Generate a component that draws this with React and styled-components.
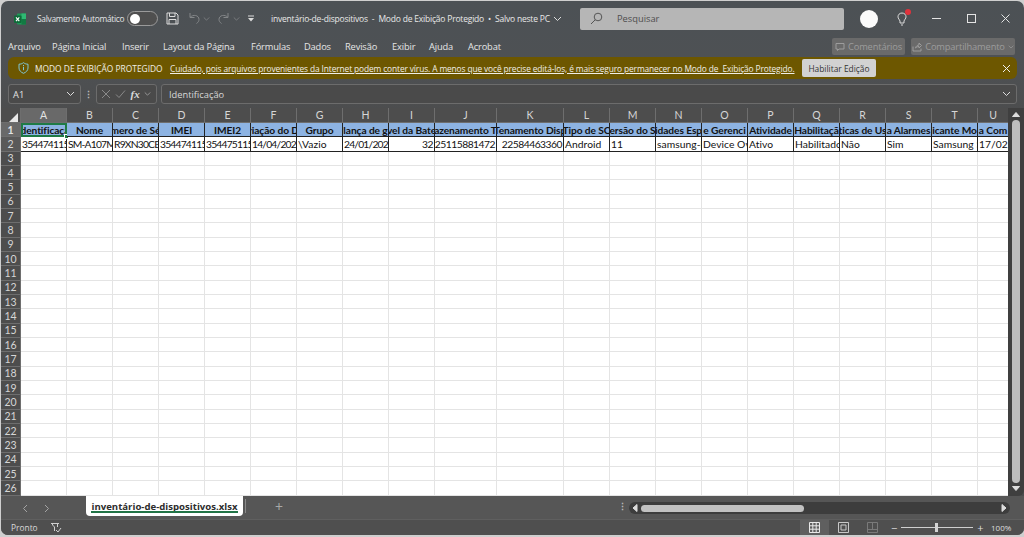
import React from "react";
import styled, { createGlobalStyle } from "styled-components";

const Global = createGlobalStyle`
  html, body { margin: 0; padding: 0; background: #d4d4d4; overflow: hidden; }
  * { box-sizing: border-box; }
`;

const UI = `"Open Sans", "Noto Sans", "Liberation Sans", sans-serif`;
const CELL = `Lato, "Liberation Sans", sans-serif`;

const Page = styled.div`
  width: 1024px; height: 537px; padding: 1px 0 2px 1px; background: #cfcfcf;
`;
const Win = styled.div`
  width: 1023px; height: 534px; border-radius: 7px; overflow: hidden;
  display: flex; flex-direction: column; color: #e6e6e6;
  font-family: ${UI}; background: linear-gradient(#4c5155 0, #4e5154 60px, #4c4d4e 110px);
`;
const TitleBar = styled.div`
  height: 35px; display: flex; align-items: center; padding-left: 13px; flex: none;
`;
const AutoLabel = styled.span`
  font-size: 8.4px; letter-spacing: -0.27px; margin-left: 11px; width: 90px; white-space: nowrap; color: #e4e6e8;
`;
const Toggle = styled.span`
  width: 31px; height: 15px; border: 1px solid #9a9a9a; border-radius: 8px; background: #4f4f4f;
  display: flex; align-items: center; padding-left: 2px;
  &::before { content: ""; width: 10px; height: 10px; border-radius: 50%; background: #fff; }
`;
const QuickIcon = styled.span`
  display: inline-flex; margin-left: ${p => p.$ml}px; opacity: ${p => p.$dim ? 0.38 : 1};
`;
const DocTitle = styled.span`
  font-size: 8.5px; letter-spacing: -0.2px; white-space: nowrap; margin-left: 16px; width: 308px; display: flex; align-items: center; gap: 3px; color: #e8e8e8;
`;
const Search = styled.div`
  width: 264px; height: 22px; background: #b6b6b6; border-radius: 2px; margin-left: 1px;
  display: flex; align-items: center; gap: 14px; padding-left: 10px; color: #4e4e4e; font-size: 9.3px;
`;
const Avatar = styled.span`
  width: 18px; height: 18px; border-radius: 50%; background: #fbfbfb; margin-left: 16px; display: inline-flex;
`;
const Bulb = styled.span`
  position: relative; margin-left: 19px; display: inline-flex;
  &::after { content: ""; position: absolute; right: -4px; top: -3px; width: 6px; height: 6px; border-radius: 50%; background: #e0323c; }
`;
const WinButtons = styled.div`
  margin-left: 24px; display: flex; gap: 23.5px; align-items: center;
`;
const Ribbon = styled.div`
  height: 21px; display: flex; align-items: center; padding-left: 7px; flex: none; font-size: 9.3px; letter-spacing: -0.15px;
`;
const Tab = styled.span`
  width: ${p => p.$w}px; white-space: nowrap; color: #e6e6e6;
`;
const RibbonRight = styled.div`
  margin-left: auto; margin-right: 9px; display: flex; gap: 6px;
`;
const GhostBtn = styled.span`
  height: 17px; width: ${p => p.$w}px; background: #6a6a6a; border-radius: 2px; color: #9c9c9c; font-size: 9.3px;
  display: inline-flex; align-items: center; justify-content: center; gap: 3px; white-space: nowrap;
`;
const Banner = styled.div`
  height: 22px; margin: 0 7px; flex: none; background: #6d5700; border-radius: 6px;
  display: flex; align-items: center; padding-left: 10px; font-size: 8.4px; color: #f0eee6; white-space: nowrap;
`;
const BannerTitle = styled.span`
  margin-left: 6px; width: 135px;
`;
const BannerLink = styled.span`
  text-decoration: underline; width: 632px; letter-spacing: -0.125px;
`;
const EnableBtn = styled.span`
  width: 74px; height: 18px; background: #d2d2d2; border-radius: 2px; color: #333; display: inline-flex;
  align-items: center; justify-content: center;
`;
const BannerClose = styled.span`
  margin-left: auto; margin-right: 6px; display: inline-flex;
`;
const FormulaBar = styled.div`
  height: 20px; margin: 5px 7px 0; flex: none; display: flex; align-items: center;
`;
const Box = styled.div`
  height: 100%; border: 1px solid #6c6c6c; border-radius: 3px; background: #4a4a4a;
  display: flex; align-items: center; font-size: 9.3px; color: #e0e0e0; width: ${p => p.$w ? p.$w + "px" : "auto"};
  flex: ${p => p.$w ? "none" : 1}; margin-left: ${p => p.$ml || 0}px; padding: 0 5px 0 4px; justify-content: ${p => p.$between ? "space-between" : "flex-start"};
`;
const Dots = styled.span`
  width: 15px; text-align: center; color: #bbb; font-size: 9px; font-weight: 700; line-height: 1;
`;
const Fx = styled.i`
  font-family: "Liberation Serif", serif; font-weight: 700; font-size: 11px; color: #dcdcdc;
`;
const FormulaText = styled.span`
  padding-left: 3px; color: #d8d8d8;
`;
const SheetWrap = styled.div`
  margin-top: 4px; height: 388px; flex: none; display: flex;
`;
const Sheet = styled.div`
  flex: 1; display: grid; background: #fff; overflow: hidden;
  grid-template-columns: 20px repeat(9, 46px) 62px 67px repeat(9, 46px) 31px;
  grid-template-rows: 15px repeat(26, 14.33px);
`;
const Head = styled.div`
  background: ${p => p.$on ? "#696969" : "#4d4d4d"}; color: ${p => p.$on ? "#e4e4e4" : "#d6d6d6"};
  border-right: 1px solid #6e6e6e; border-bottom: 1px solid #6e6e6e; font: 10.5px ${CELL};
  display: flex; align-items: center; justify-content: center;
`;
const Corner = styled(Head)`
  &::after { content: ""; margin: 4px 0 0 6px; border-left: 9px solid transparent; border-bottom: 9px solid #e8e8e8; }
`;
const RowHead = styled(Head)`
  font-weight: ${p => p.$on ? 700 : 400}; background: ${p => p.$on ? "#696969" : p.$mid ? "#595959" : "#4d4d4d"};
`;
const Cell = styled.div`
  background: #fff; border-right: 1px solid #e4e4e4; border-bottom: 1px solid #e4e4e4; min-width: 0;
`;
const Title = styled(Cell)`
  background: #8db3e2; border-right: 1px solid #222; border-bottom: 1px solid #222; color: #111;
  font: 700 10.2px ${CELL}; letter-spacing: -0.08px; display: flex; align-items: center; justify-content: center; overflow: hidden; white-space: nowrap; position: relative;
  ${p => p.$sel && `outline: 2px solid #1f7a45; outline-offset: -2px; overflow: visible;`}
`;
const Inner = styled.span`
  overflow: hidden; flex: none; display: flex; justify-content: center; width: 100%;
`;
const Handle = styled.span`
  position: absolute; right: -3px; bottom: -3px; width: 5px; height: 5px; background: #1f7a45; border: 1px solid #fff;
`;
const Val = styled(Cell)`
  border-right: 1px solid #222; border-bottom: 1px solid #222; color: #111; font: 10.3px ${CELL};
  display: flex; align-items: center; justify-content: ${p => p.$num ? "flex-end" : "flex-start"}; overflow: hidden; white-space: nowrap;
  padding: 0 1px; letter-spacing: ${p => p.$tight ? "-0.8px" : p.$num ? "-0.5px" : "0.05px"};
`;
const VScroll = styled.div`
  width: 16px; background: #3f3f3f; border-radius: 0 0 6px 0; display: flex; flex-direction: column; align-items: center; padding: 4px 0 5px;
`;
const Thumb = styled.div`
  width: 8px; flex: 1; margin: 3px 0; background: #bdbdbd; border-radius: 4px;
`;
const SheetBar = styled.div`
  height: 23px; flex: none; display: flex; background: #565656;
`;
const Nav = styled.div`
  width: 85px; display: flex; gap: 16px; padding: 8px 0 0 21px; flex: none;
`;
const SheetTab = styled.div`
  width: 157px; height: 20px; background: #fff; border-radius: 0 0 4px 4px; color: #2d2d2d; font-size: 9.6px; font-weight: 700;
  display: flex; align-items: center; justify-content: center; position: relative; white-space: nowrap; font-family: "Open Sans", sans-serif;
  &::after { content: ""; position: absolute; left: 5px; right: 5px; bottom: 3px; height: 2px; background: #217346; }
`;
const Sep = styled.span`
  width: 1px; height: 14px; margin: 3px 0 0 2px; background: #8a8a8a;
`;
const Plus = styled.span`
  margin-left: 29px; padding-top: 4px; color: #a8a8a8; font-size: 14px; line-height: 1;
`;
const MoreDots = styled.span`
  margin-left: auto; width: 12px; padding-top: 4px; color: #bbb; font-size: 9px; font-weight: 700; text-align: center;
`;
const HScroll = styled.div`
  width: 381px; height: 12px; margin: 6px 14px 0 1px; background: #3d3d3d; border-radius: 6px; display: flex; align-items: center; padding: 0 3px; gap: 3px;
`;
const HThumb = styled.div`
  width: 163px; height: 7px; background: #c2c2c2; border-radius: 4px;
`;
const HSpacer = styled.span`
  flex: 1;
`;
const Status = styled.div`
  flex: 1; display: flex; align-items: center; padding-left: 10px; background: #4f4f4f; border-top: 1px solid #5f5f5f; font-size: 8.4px; color: #d8d8d8;
`;
const MacroIcon = styled.span`
  margin-left: 12px; display: inline-flex;
`;
const StatusRight = styled.div`
  margin-left: auto; display: flex; align-items: center; height: 100%;
`;
const ViewBtn = styled.span`
  width: 29px; height: 100%; display: inline-flex; align-items: center; justify-content: center; background: ${p => p.$on ? "#5f5f5f" : "transparent"};
`;
const Zoomer = styled.div`
  width: 96px; margin-left: 2px; padding-left: 2px; display: flex; align-items: center; gap: 4px; color: #ddd; font-size: 11px;
`;
const Slider = styled.span`
  width: 72px; height: 1px; background: #cfcfcf; position: relative;
  &::after { content: ""; position: absolute; left: 34px; top: -4px; width: 3px; height: 9px; background: #d4d4d4; }
`;
const Pct = styled.span`
  width: 33px; margin-left: 6px; font-size: 8px; color: #ddd;
`;

const Svg = ({ w = 12, h = 12, vb, c = "#dcdcdc", sw = 1, children, fill = "none" }) => (
  <svg width={w} height={h} viewBox={vb || `0 0 ${w} ${h}`} fill={fill} stroke={c} strokeWidth={sw}>{children}</svg>
);

const ExcelLogo = () => (
  <svg width="12" height="12" viewBox="0 0 12 12">
    <rect x="3" y="0.5" width="9" height="11" rx="1" fill="#1c9a57" />
    <rect x="7.5" y="0.5" width="4.5" height="5.5" fill="#2fb873" />
    <rect x="7.5" y="6" width="4.5" height="5.5" fill="#127a43" />
    <rect x="0" y="2.5" width="7.5" height="7.5" rx="1" fill="#0f6b3a" />
    <path d="M2 4.3 L5.3 8.2 M5.3 4.3 L2 8.2" stroke="#fff" strokeWidth="1.1" />
  </svg>
);
const Chevron = ({ c = "#dcdcdc", w = 9 }) => (
  <Svg w={w} h={6} vb="0 0 9 6" c={c}><path d="M1 1 L4.5 4.5 L8 1" /></Svg>
);

const cols = "ABCDEFGHIJKLMNOPQRSTU".split("");
const titles = ["Identificaçã", "Nome", "mero de Sé", "IMEI", "IMEI2", "riação do D", "Grupo", "lança de g", "vel da Bate", "azenamento T", "Tenamento Disp", "Tipo de SC", "ersão do S", "idades Esp", "e Gerenci", "Atividade", "Habilitaçã", "ticas de Us", "a Alarmes", "icante Mo", "a Com"];
const values = [
  ["354474115", false, true], ["SM-A107M", false, true], ["R9XN30CB", false, true], ["354474115", false, true], ["354475115", false, true], ["14/04/202", false, true], ["\\Vazio"], ["24/01/202", false, true],
  ["32", true], ["25115881472", true], ["22584463360", true], ["Android"], ["11"], ["samsung-l"], ["Device Ov"], ["Ativo"], ["Habilitado"], ["Não"], ["Sim"], ["Samsung S"], ["17/02/"],
];
const tabs = [["Arquivo", 44], ["Página Inicial", 70], ["Inserir", 41], ["Layout da Página", 88], ["Fórmulas", 53], ["Dados", 41], ["Revisão", 47], ["Exibir", 37], ["Ajuda", 39], ["Acrobat", 50]];
const blank = Array.from({ length: 24 }, (_, i) => i + 3);

export default function App() {
  return (
    <Page>
      <Global />
      <Win>
        <TitleBar>
          <ExcelLogo />
          <AutoLabel>Salvamento Automático</AutoLabel>
          <Toggle />
          <QuickIcon $ml={8}>
            <Svg w={13} h={13}><path d="M1 1 H10 L12 3 V12 H1 Z M3.5 1 V4.5 H9 V1 M3 12 V7.5 H10 V12" /></Svg>
          </QuickIcon>
          <QuickIcon $ml={8} $dim>
            <Svg w={14} h={13}><path d="M3 1 V5.5 H7.5 M3 5.5 C6 2 12 3 12 7.5 C12 9 11 10.5 9.5 11.5" sw="1.2" /></Svg>
          </QuickIcon>
          <QuickIcon $ml={2} $dim><Chevron w={7} /></QuickIcon>
          <QuickIcon $ml={7} $dim>
            <Svg w={14} h={13}><path d="M11 1 V5.5 H6.5 M11 5.5 C8 2 2 3 2 7.5 C2 9 3 10.5 4.5 11.5" /></Svg>
          </QuickIcon>
          <QuickIcon $ml={2} $dim><Chevron w={7} /></QuickIcon>
          <QuickIcon $ml={7}>
            <Svg w={8} h={8} fill="#dcdcdc" sw={0}><path d="M1 0.5 H7 V1.5 H1 Z M1 3 H7 L4 6.5 Z" /></Svg>
          </QuickIcon>
          <DocTitle>inventário-de-dispositivos&nbsp; -&nbsp; Modo de Exibição Protegido&nbsp; •&nbsp; Salvo neste PC <Chevron /></DocTitle>
          <Search>
            <Svg w={13} h={13} c="#555"><circle cx="8" cy="5" r="3.8" /><path d="M5.2 7.8 L1 12" sw="1.3" /></Svg>
            Pesquisar
          </Search>
          <Avatar />
          <Bulb>
            <Svg w={10} h={14}><path d="M5 1 C2.5 1 1 2.8 1 4.8 C1 6.5 2.3 7.4 3 9 V11 H7 V9 C7.7 7.4 9 6.5 9 4.8 C9 2.8 7.5 1 5 1 Z M4 13 H6" /></Svg>
          </Bulb>
          <WinButtons>
            <Svg w={11} h={11} c="#e4e4e4"><path d="M1 5.5 H10" /></Svg>
            <Svg w={11} h={11} c="#e4e4e4"><rect x="1.5" y="1.5" width="8" height="8" /></Svg>
            <Svg w={11} h={11} c="#e4e4e4"><path d="M1.5 1.5 L9.5 9.5 M9.5 1.5 L1.5 9.5" /></Svg>
          </WinButtons>
        </TitleBar>
        <Ribbon>
          {tabs.map(([t, w]) => <Tab key={t} $w={w}>{t}</Tab>)}
          <RibbonRight>
            <GhostBtn $w={73}>
              <Svg w={10} h={10} c="#9c9c9c"><path d="M1 1.5 H9 V7 H4 L2.5 8.5 V7 H1 Z" /></Svg>Comentários
            </GhostBtn>
            <GhostBtn $w={104}>
              <Svg w={10} h={10} c="#9c9c9c"><path d="M1 4.5 V9 H9 V6.5 M3.5 6 C4 4 5.5 3 7 3 V1 L9.5 3.5 L7 6 V4.5 C5.5 4.5 4.5 5 3.5 6 Z" /></Svg>
              Compartilhamento <Chevron c="#9c9c9c" w={6} />
            </GhostBtn>
          </RibbonRight>
        </Ribbon>
        <Banner>
          <Svg w={11} h={12} c="#7fc6d6"><path d="M5.5 0.7 C7 1.8 8.5 2.2 10 2.2 V6 C10 8.5 8 10.3 5.5 11.3 C3 10.3 1 8.5 1 6 V2.2 C2.5 2.2 4 1.8 5.5 0.7 Z M5.5 4.8 V8.2 M5.5 3 V4" /></Svg>
          <BannerTitle>MODO DE EXIBIÇÃO PROTEGIDO</BannerTitle>
          <BannerLink>Cuidado, pois arquivos provenientes da Internet podem conter vírus. A menos que você precise editá-los, é mais seguro permanecer no Modo de&nbsp; Exibição Protegido.</BannerLink>
          <EnableBtn>Habilitar Edição</EnableBtn>
          <BannerClose>
            <Svg w={9} h={9} c="#efefef"><path d="M1 1 L8 8 M8 1 L1 8" sw="1.2" /></Svg>
          </BannerClose>
        </Banner>
        <FormulaBar>
          <Box $w={73} $between><span>A1</span><Chevron /></Box>
          <Dots>⋮</Dots>
          <Box $w={61} $between>
            <Svg w={10} h={10} c="#8a8a8a"><path d="M1 1 L9 9 M9 1 L1 9" /></Svg>
            <Svg w={11} h={10} c="#8a8a8a"><path d="M1 5.5 L4 8.5 L10 1.5" /></Svg>
            <Fx>fx</Fx>
            <Chevron w={7} c="#aaa" />
          </Box>
          <Box $ml={4} $between>
            <FormulaText>Identificação</FormulaText><Chevron />
          </Box>
        </FormulaBar>
        <SheetWrap>
          <Sheet>
            <Corner />
            {cols.map((c, i) => <Head key={c} $on={i === 0}>{c}</Head>)}
            <RowHead $on>1</RowHead>
            {titles.map((t, i) => (
              <Title key={i} $sel={i === 0}><Inner>{t}</Inner>{i === 0 && <Handle />}</Title>
            ))}
            <RowHead $mid>2</RowHead>
            {values.map(([v, n, d], i) => <Val key={i} $num={n} $tight={d}>{v}</Val>)}
            {blank.map(r => (
              <React.Fragment key={r}>
                <RowHead>{r}</RowHead>
                {cols.map(c => <Cell key={c} />)}
              </React.Fragment>
            ))}
          </Sheet>
          <VScroll>
            <Svg w={8} h={5} vb="0 0 8 5" c="#ddd" fill="#ddd"><path d="M4 0.5 L7.5 4.5 H0.5 Z" /></Svg>
            <Thumb />
            <Svg w={8} h={5} vb="0 0 8 5" c="#ddd" fill="#ddd"><path d="M4 4.5 L7.5 0.5 H0.5 Z" /></Svg>
          </VScroll>
        </SheetWrap>
        <SheetBar>
          <Nav>
            <Svg w={6} h={9} c="#a4a4a4"><path d="M5 1 L1.5 4.5 L5 8" /></Svg>
            <Svg w={6} h={9} c="#a4a4a4"><path d="M1 1 L4.5 4.5 L1 8" /></Svg>
          </Nav>
          <SheetTab>inventário-de-dispositivos.xlsx</SheetTab>
          <Sep />
          <Plus>+</Plus>
          <MoreDots>⋮</MoreDots>
          <HScroll>
            <Svg w={6} h={8} c="#ddd" fill="#ddd"><path d="M5 0.5 V7.5 L1 4 Z" /></Svg>
            <HThumb />
            <HSpacer />
            <Svg w={6} h={8} c="#ddd" fill="#ddd"><path d="M1 0.5 V7.5 L5 4 Z" /></Svg>
          </HScroll>
        </SheetBar>
        <Status>
          Pronto
          <MacroIcon>
            <Svg w={12} h={12} c="#cfcfcf"><path d="M1 1.5 H9 M2.5 1.5 V3 L4.5 5 V9 M7.5 1.5 V5 M6 8 L8 10 L11 6" /></Svg>
          </MacroIcon>
          <StatusRight>
            <ViewBtn $on>
              <Svg w={11} h={11} c="#e8e8e8"><path d="M0.5 0.5 H10.5 V10.5 H0.5 Z M0.5 3.8 H10.5 M0.5 7.2 H10.5 M3.8 0.5 V10.5 M7.2 0.5 V10.5" /></Svg>
            </ViewBtn>
            <ViewBtn>
              <Svg w={11} h={11} c="#c8c8c8"><path d="M0.5 0.5 H10.5 V10.5 H0.5 Z M3 3 H8 V8 H3 Z" /></Svg>
            </ViewBtn>
            <ViewBtn>
              <Svg w={11} h={11} c="#7a7a7a"><path d="M0.5 0.5 H10.5 V10.5 H0.5 Z M0.5 7.5 H10.5 M5.5 0.5 V7.5" /></Svg>
            </ViewBtn>
            <Zoomer>−<Slider />+</Zoomer>
            <Pct>100%</Pct>
          </StatusRight>
        </Status>
      </Win>
    </Page>
  );
}
